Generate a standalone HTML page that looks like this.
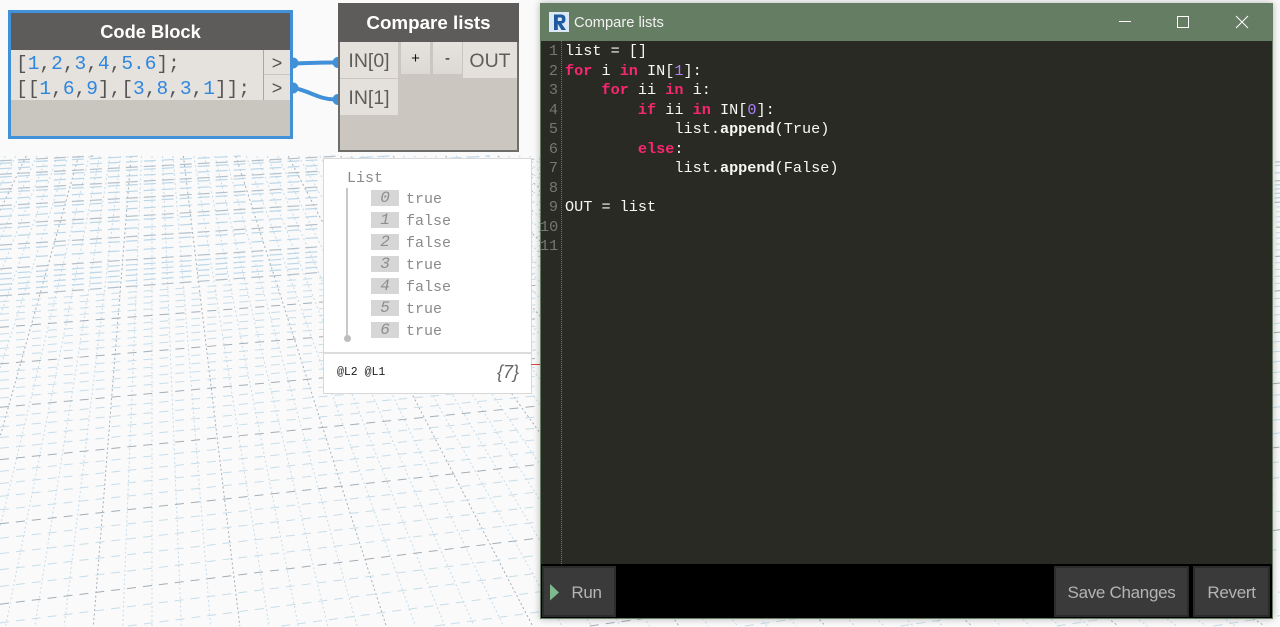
<!DOCTYPE html>
<html><head><meta charset="utf-8"><title>Compare lists</title>
<style>
html,body{margin:0;padding:0;width:1280px;height:627px;overflow:hidden;background:#fafafa;font-family:"Liberation Sans",sans-serif}
#root{position:relative;width:1280px;height:627px;overflow:hidden}
.a{position:absolute;box-sizing:border-box}
.t{position:absolute;white-space:pre}
.mono{font-family:"Liberation Mono",monospace}
.n{color:#2f86de}.b{color:#555}
.k{color:#f92672;font-weight:bold}.p{color:#ae81ff}.f{font-weight:bold}
.port{color:#5f5d5b;font-size:19.5px;display:flex;align-items:center;justify-content:center;background:#e4e1dc;padding-top:3px}
.btn{background:#3a3a3a;border:2px solid #2c2c2c;color:#b4b4b4;font-size:17px;letter-spacing:-.3px;display:flex;align-items:center;justify-content:center;padding-top:2px}
.idx{position:absolute;left:371px;width:28px;height:16px;background:#d6d6d6;color:#8d8d8d;font:italic 16px/16px "Liberation Mono",monospace;text-align:center}
.val{position:absolute;left:406px;color:#8a8a8a;font:15px/16px "Liberation Mono",monospace}
#code div{height:19.5px;line-height:19.5px;white-space:pre}
#nums div{height:19.5px;line-height:19.5px;text-align:right}
</style></head><body><div id="root">

<svg id="grid" class="a" style="left:0;top:0" width="1280" height="627" viewBox="0 0 1280 627"></svg>

<!-- Wires -->
<svg class="a" style="left:285px;top:50px" width="65" height="60" viewBox="285 50 65 60">
<path d="M294 63.500C310 63 320 62.500 336 62.500M294 88C310 91 320 100 336 99.500" fill="none" stroke="#4191d9" stroke-width="4"/>
<circle cx="293" cy="63" r="5.500" fill="#4191d9"/><circle cx="293" cy="88" r="5.500" fill="#4191d9"/>
<circle cx="338" cy="62.500" r="5.500" fill="#4191d9"/><circle cx="338" cy="99.500" r="5.500" fill="#4191d9"/>
</svg>

<!-- Code Block node -->
<div class="a" style="left:8px;top:10px;width:285px;height:129px;border:3px solid #4191d9;background:#c9c5bf"></div>
<div class="a" style="left:11px;top:13px;width:279px;height:37px;background:#5e5c5a;color:#fff;font-weight:bold;font-size:18.300px;line-height:37px;text-align:center">Code Block</div>
<div class="a" style="left:11px;top:50px;width:252px;height:50px;background:#e5e2de"></div>
<div class="a" style="left:263px;top:50px;width:27px;height:25px;background:#e5e2de;border-left:1px solid #aaa7a3;border-bottom:1px solid #c9c5bf;color:#555;font-size:18px;text-align:center;line-height:27px">&gt;</div>
<div class="a" style="left:263px;top:75px;width:27px;height:25px;background:#e5e2de;border-left:1px solid #aaa7a3;color:#555;font-size:18px;text-align:center;line-height:27px">&gt;</div>
<div class="t mono" style="left:16px;top:52px;font-size:19.500px;line-height:25px"><span class="b">[</span><span class="n">1</span><span class="b">,</span><span class="n">2</span><span class="b">,</span><span class="n">3</span><span class="b">,</span><span class="n">4</span><span class="b">,</span><span class="n">5.6</span><span class="b">];</span>
<span class="b">[[</span><span class="n">1</span><span class="b">,</span><span class="n">6</span><span class="b">,</span><span class="n">9</span><span class="b">],[</span><span class="n">3</span><span class="b">,</span><span class="n">8</span><span class="b">,</span><span class="n">3</span><span class="b">,</span><span class="n">1</span><span class="b">]];</span></div>

<!-- Compare node -->
<div class="a" style="left:338px;top:3px;width:181px;height:149px;background:#cbc7c0;border:2px solid #6f6d6a;border-top:0"></div>
<div class="a" style="left:338px;top:3px;width:181px;height:39px;background:#5e5c5a;color:#fff;font-weight:bold;font-size:18.800px;line-height:40px;text-align:center">Compare lists</div>
<div class="a port" style="left:340px;top:42px;width:58px;height:36px">IN[0]</div>
<div class="a port" style="left:340px;top:79px;width:58px;height:36px">IN[1]</div>
<div class="a port" style="left:401px;top:42px;width:29px;height:32px;color:#111;font-size:15px;background:linear-gradient(#e6e3df,#dcd9d3);padding-top:0">+</div>
<div class="a port" style="left:433px;top:42px;width:29px;height:32px;color:#111;font-size:15px;background:linear-gradient(#e6e3df,#dcd9d3);padding-top:0">-</div>
<div class="a port" style="left:463px;top:42px;width:54px;height:36px">OUT</div>

<!-- Watch -->
<div class="a" style="left:323px;top:158px;width:209px;height:236px;background:#fff;border:1px solid #d8d8d8"></div>
<div class="a" style="left:324px;top:352px;width:207px;height:2px;background:#dcdcdc"></div>
<div class="t mono" style="left:347px;top:171px;font-size:15px;line-height:16px;color:#8a8a8a">List</div>
<div class="a" style="left:346px;top:188px;width:2px;height:150px;background:#c8c8c8"></div>
<div class="a" style="left:344px;top:335px;width:7px;height:7px;border-radius:50%;background:#bdbdbd"></div>
<div class="idx" style="top:190px">0</div><div class="val" style="top:192px">true</div>
<div class="idx" style="top:212px">1</div><div class="val" style="top:214px">false</div>
<div class="idx" style="top:234px">2</div><div class="val" style="top:236px">false</div>
<div class="idx" style="top:256px">3</div><div class="val" style="top:258px">true</div>
<div class="idx" style="top:278px">4</div><div class="val" style="top:280px">false</div>
<div class="idx" style="top:300px">5</div><div class="val" style="top:302px">true</div>
<div class="idx" style="top:322px">6</div><div class="val" style="top:324px">true</div>
<div class="t mono" style="left:337px;top:366px;font-size:11.500px;line-height:14px;color:#222">@L2 @L1</div>
<div class="t" style="left:497px;top:361px;font-size:18px;line-height:22px;font-style:italic;color:#666">{7}</div>
<div class="a" style="left:531px;top:364px;width:9px;height:1px;background:#d44"></div>

<!-- Window -->
<div class="a" style="left:540px;top:3px;width:733px;height:616px;background:#000;border:1px solid #657d63;box-shadow:0 0 7px rgba(0,0,0,.28)"></div>
<div class="a" style="left:540px;top:3px;width:732px;height:38px;background:#657d63"></div>
<svg class="a" style="left:549px;top:12px" width="20" height="20" viewBox="0 0 20 20">
<rect width="20" height="20" fill="#dce8f5"/>
<path d="M5 2.500H12Q16.500 2.500 16.500 7T12.500 11.500L17 18H12.500L8.800 11.700V18H5ZM8.800 5.500V9H11.500Q13 9 13 7.200T11.500 5.500Z" fill="#1f5a9e"/>
</svg>
<div class="t" style="left:574px;top:14px;font-size:14.700px;line-height:18px;color:#f2f2f2">Compare lists</div>
<svg class="a" style="left:1110px;top:10px" width="150" height="24" viewBox="1110 10 150 24">
<path d="M1119 21.500H1131" stroke="#fff" stroke-width="1" fill="none"/>
<rect x="1177.500" y="16.500" width="11" height="11" stroke="#fff" stroke-width="1" fill="none"/>
<path d="M1236 16L1248 28M1248 16L1236 28" stroke="#fff" stroke-width="1" fill="none"/>
</svg>

<div class="a" style="left:541px;top:41px;width:731px;height:523px;background:#292a23"></div>
<div class="a" style="left:561px;top:41px;width:0;height:523px;border-left:1px dotted #77776f"></div>
<div id="nums" class="a mono" style="left:540px;top:42px;width:18px;font-size:15.200px;color:#77776f">
<div>1</div><div>2</div><div>3</div><div>4</div><div>5</div><div>6</div><div>7</div><div>8</div><div>9</div><div>10</div><div>11</div>
</div>
<div id="code" class="a mono" style="left:565px;top:42px;font-size:15.200px;color:#f8f8f2">
<div>list = []</div>
<div><span class="k">for</span> i <span class="k">in</span> IN[<span class="p">1</span>]:</div>
<div>    <span class="k">for</span> ii <span class="k">in</span> i:</div>
<div>        <span class="k">if</span> ii <span class="k">in</span> IN[<span class="p">0</span>]:</div>
<div>            list.<span class="f">append</span>(True)</div>
<div>        <span class="k">else</span>:</div>
<div>            list.<span class="f">append</span>(False)</div>
<div> </div>
<div>OUT = list</div>
</div>

<div class="a btn" style="left:542px;top:566px;width:74px;height:51px;padding-left:15px">Run</div>
<svg class="a" style="left:550px;top:584px" width="10" height="17" viewBox="0 0 10 17"><path d="M0 0L9 8.500L0 16.500Z" fill="#7fb88c"/></svg>
<div class="a btn" style="left:1054px;top:566px;width:135px;height:51px">Save Changes</div>
<div class="a btn" style="left:1193px;top:566px;width:77px;height:51px">Revert</div>

</div>
<script>
(function(){
var vx=152,vy=-106,yTop=156,yBot=626,o=[];
function hAt(y0,x){return y0-0.1*(y0+160)/622*x;}
for(var i=-30;i<=40;i++){
  var k=-0.08+i*0.04,dark=(i%5===0);
  var x1=vx+k*(yTop-vy),x2=vx+k*(yBot-vy),y2=yBot;
  if(x1<0||x1>1280) continue;
  if(x2<0){y2=vy+(0-vx)/k;x2=0;}
  if(x2>1280){y2=vy+(1280-vx)/k;x2=1280;}
  o.push('<line x1="'+x1.toFixed(1)+'" y1="'+yTop+'" x2="'+x2.toFixed(1)+'" y2="'+y2.toFixed(1)+'" stroke="'+(dark?'#a4afb8':'#c6dcea')+'" stroke-width="1" stroke-dasharray="2 2.500"/>');
}
var last=1e9;
for(var j=0;j<110;j++){
  var inv=0.001408-0.00036+j*0.000036;
  var y0=1/inv+vy, d=(j%5===0);
  if(y0<yTop-50) break;
  if(!d && last-y0<5) continue;
  last=y0;
  var top=y0<300;
  var ya=hAt(y0,0),yb=hAt(y0,1280),xa=0,xb=1280,s=(ya-yb)/1280;
  if(yb>yBot) continue;
  if(ya>yBot){xa=(ya-yBot)/s;ya=yBot;}
  if(yb<yTop){xb=xa+(ya-yTop)/s;yb=yTop;}
  o.push('<line x1="'+xa.toFixed(1)+'" y1="'+ya.toFixed(1)+'" x2="'+xb.toFixed(1)+'" y2="'+yb.toFixed(1)+'" stroke="'+(d?(top?'#b4c0ca':'#a3aeb7'):(top?'#bcd7e8':'#c8dde9'))+'" stroke-width="'+(top?1.2:1)+'" stroke-dasharray="'+(top?'12 6':'9 7')+'"/>');
}
document.getElementById('grid').innerHTML=o.join('');
})();
</script>
</body></html>
